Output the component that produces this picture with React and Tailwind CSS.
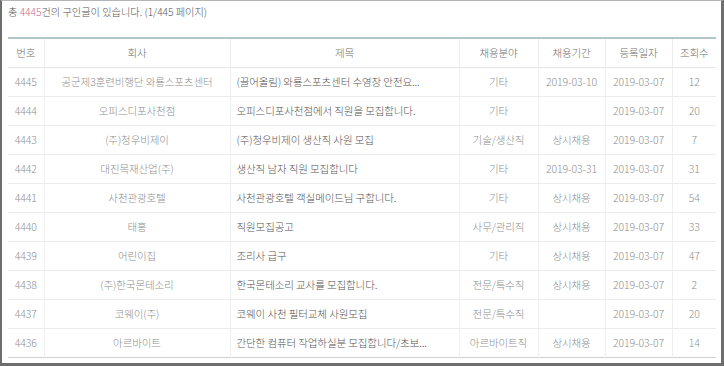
import React from 'react';

const rows = [
  ['4445', '공군제3훈련비행단 와룡스포츠센터', '(끌어올림) 와룡스포츠센터 수영장 안전요...', '기타', '2019-03-10', '2019-03-07', '12'],
  ['4444', '오피스디포사천점', '오피스디포사천점에서 직원을 모집합니다.', '기타', '', '2019-03-07', '20'],
  ['4443', '(주)청우비제이', '(주)청우비제이 생산직 사원 모집', '기술/생산직', '상시채용', '2019-03-07', '7'],
  ['4442', '대진목재산업(주)', '생산직 남자 직원 모집합니다', '기타', '2019-03-31', '2019-03-07', '31'],
  ['4441', '사천관광호텔', '사천관광호텔 객실메이드님 구합니다.', '기타', '상시채용', '2019-03-07', '54'],
  ['4440', '태홍', '직원모집공고', '사무/관리직', '상시채용', '2019-03-07', '33'],
  ['4439', '어린이집', '조리사 급구', '기타', '상시채용', '2019-03-07', '47'],
  ['4438', '(주)한국몬테소리', '한국몬테소리 교사를 모집합니다.', '전문/특수직', '상시채용', '2019-03-07', '2'],
  ['4437', '코웨이(주)', '코웨이 사천 필터교체 사원모집', '전문/특수직', '', '2019-03-07', '20'],
  ['4436', '아르바이트', '간단한 컴퓨터 작업하실분 모집합니다/초보...', '아르바이트직', '상시채용', '2019-03-07', '14'],
];

const headers = ['번호', '회사', '제목', '채용분야', '채용기간', '등록일자', '조회수'];

function App() {
  return (
    <div className="w-[724px] h-[366px] bg-white border-t border-l-2 border-r-[3px] border-b-[3px] border-[#6e6e6e] border-t-[#b5b5b5] overflow-hidden font-['Noto_Sans_CJK_KR',sans-serif] font-light">
      {/* count line */}
      <div className="pl-[6px] pt-[3px] h-[36px] text-[10.2px] leading-[16px] text-[#555]">
        총 <span className="text-[#c9677a]">4445</span>건의 구인글이 있습니다. (1/445 페이지)
      </div>

      <table className="ml-[6px] w-[708px] table-fixed border-collapse text-[10.5px] text-[#8e8e8e] tracking-[-0.01em]">
        <colgroup>
          <col className="w-[36px]" />
          <col className="w-[186px]" />
          <col className="w-[229px]" />
          <col className="w-[79px]" />
          <col className="w-[67px]" />
          <col className="w-[67px]" />
          <col className="w-[44px]" />
        </colgroup>
        <thead>
          <tr className="h-[29px] border-t-2 border-t-[#b4c6c9] border-b border-b-[#e6e6e6]">
            {headers.map((h, i) => (
              <th
                key={h}
                className={`font-light text-[#707070] text-center ${i > 0 ? 'border-l border-l-[#ececec]' : ''}`}
              >
                {h}
              </th>
            ))}
          </tr>
        </thead>
        <tbody>
          {rows.map((r, ri) => (
            <tr
              key={r[0]}
              className={`h-[29px] border-b ${ri === rows.length - 1 ? 'border-b-[#cfcfcf]' : 'border-b-[#ececec]'}`}
            >
              <td className="text-center">{r[0]}</td>
              <td className="text-center border-l border-l-[#efefef] whitespace-nowrap overflow-hidden">{r[1]}</td>
              <td className="pl-[6px] text-[#555] border-l border-l-[#efefef] whitespace-nowrap overflow-hidden">{r[2]}</td>
              <td className="text-center border-l border-l-[#efefef] whitespace-nowrap">{r[3]}</td>
              <td className="text-center border-l border-l-[#efefef] whitespace-nowrap">{r[4]}</td>
              <td className="text-center border-l border-l-[#efefef] whitespace-nowrap">{r[5]}</td>
              <td className="text-center border-l border-l-[#efefef]">{r[6]}</td>
            </tr>
          ))}
        </tbody>
      </table>
    </div>
  );
}

export default App;
